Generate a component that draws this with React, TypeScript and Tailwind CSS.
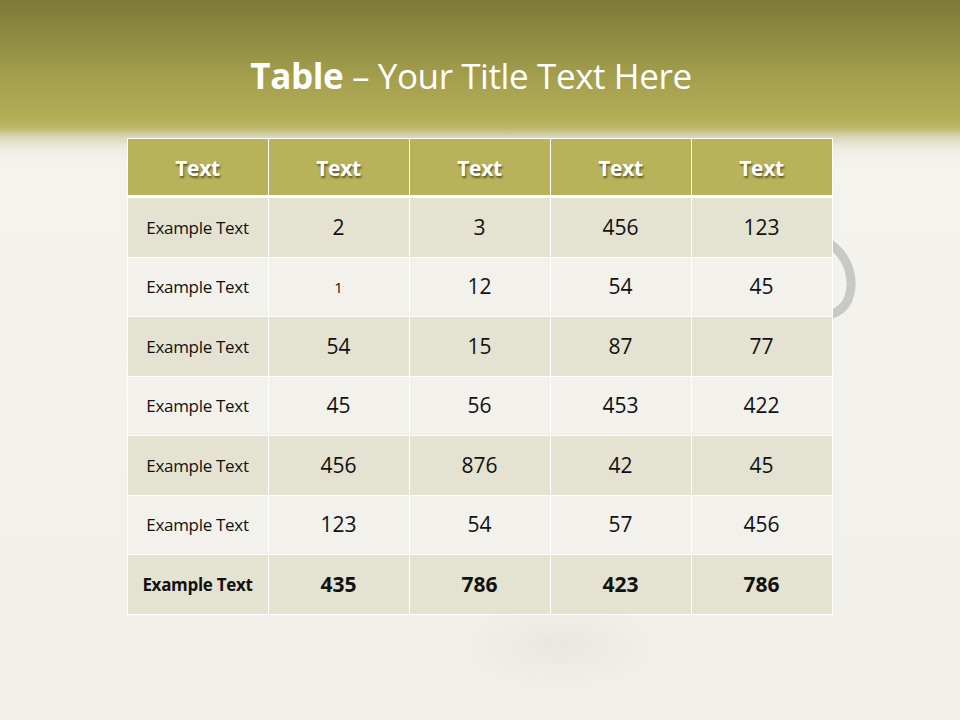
import React from "react";

const rows: { label: string; vals: string[]; bold?: boolean }[] = [
  { label: "Example Text", vals: ["2", "3", "456", "123"] },
  { label: "Example Text", vals: ["1", "12", "54", "45"] },
  { label: "Example Text", vals: ["54", "15", "87", "77"] },
  { label: "Example Text", vals: ["45", "56", "453", "422"] },
  { label: "Example Text", vals: ["456", "876", "42", "45"] },
  { label: "Example Text", vals: ["123", "54", "57", "456"] },
  { label: "Example Text", vals: ["435", "786", "423", "786"], bold: true },
];

export default function App() {
  return (
    <div
      className="relative w-[960px] h-[720px] overflow-hidden bg-[linear-gradient(to_bottom,#7d7a3a_0px,#8f8c41_40px,#a4a04e_80px,#b3ad57_118px,#bdb76c_128px,#dcdabd_138px,#efeee6_150px,#f4f3ed_170px,#f0efe9_720px)]"
      style={{ fontFamily: '"Open Sans", "Noto Sans", sans-serif' }}
    >
      <div className="absolute left-[460px] top-[600px] w-[200px] h-[90px] rounded-full bg-[radial-gradient(ellipse_at_center,rgba(210,207,194,0.25)_0%,rgba(230,228,220,0)_70%)]" />
      <svg className="absolute left-[826px] top-[240px]" width="34" height="80" viewBox="0 0 34 80">
        <path d="M4 4 C 22 16, 30 40, 22 60 C 18 68, 12 72, 6 74" stroke="#c8c8c4" strokeWidth="9" fill="none" strokeLinecap="round" />
      </svg>
      <div className="relative flex flex-col items-center">
        <h1 className="mt-[53px] h-[46px] ml-[-18px] text-[35px] leading-[46px] text-white tracking-[-0.4px]">
          <span className="font-bold">Table</span> – Your Title Text Here
        </h1>
        <div className="mt-[39px] ml-[-1px] w-[706px] border border-white bg-white grid grid-cols-5 gap-[1px]">
          {["Text", "Text", "Text", "Text", "Text"].map((t, i) => (
            <div
              key={i}
              className="h-[56px] pt-[4px] bg-[#b8b25b] flex items-center justify-center text-white font-bold text-[21px] tracking-[-0.3px] [text-shadow:1px_2px_2px_rgba(60,60,20,0.75)]"
            >
              {t}
            </div>
          ))}
          {rows.map((r, ri) => {
            const bg = ri % 2 === 0 ? "bg-[#e4e3d1]" : "bg-[#f2f1ec]";
            return (
              <React.Fragment key={ri}>
                <div
                  className={`h-[58.5px] ${bg} flex items-center justify-center text-[#111] text-[17px] tracking-[-0.3px] ${r.bold ? "font-bold" : ""} ${ri === 0 ? "mt-[2px]" : ""}`}
                >
                  {r.label}
                </div>
                {r.vals.map((v, vi) => (
                  <div
                    key={vi}
                    className={`h-[58.5px] ${bg} flex items-center justify-center text-[#111] ${ri === 1 && vi === 0 ? "text-[15px]" : "text-[21px]"} ${r.bold ? "font-bold" : ""} ${ri === 0 ? "mt-[2px]" : ""}`}
                  >
                    {v}
                  </div>
                ))}
              </React.Fragment>
            );
          })}
        </div>
      </div>
    </div>
  );
}
